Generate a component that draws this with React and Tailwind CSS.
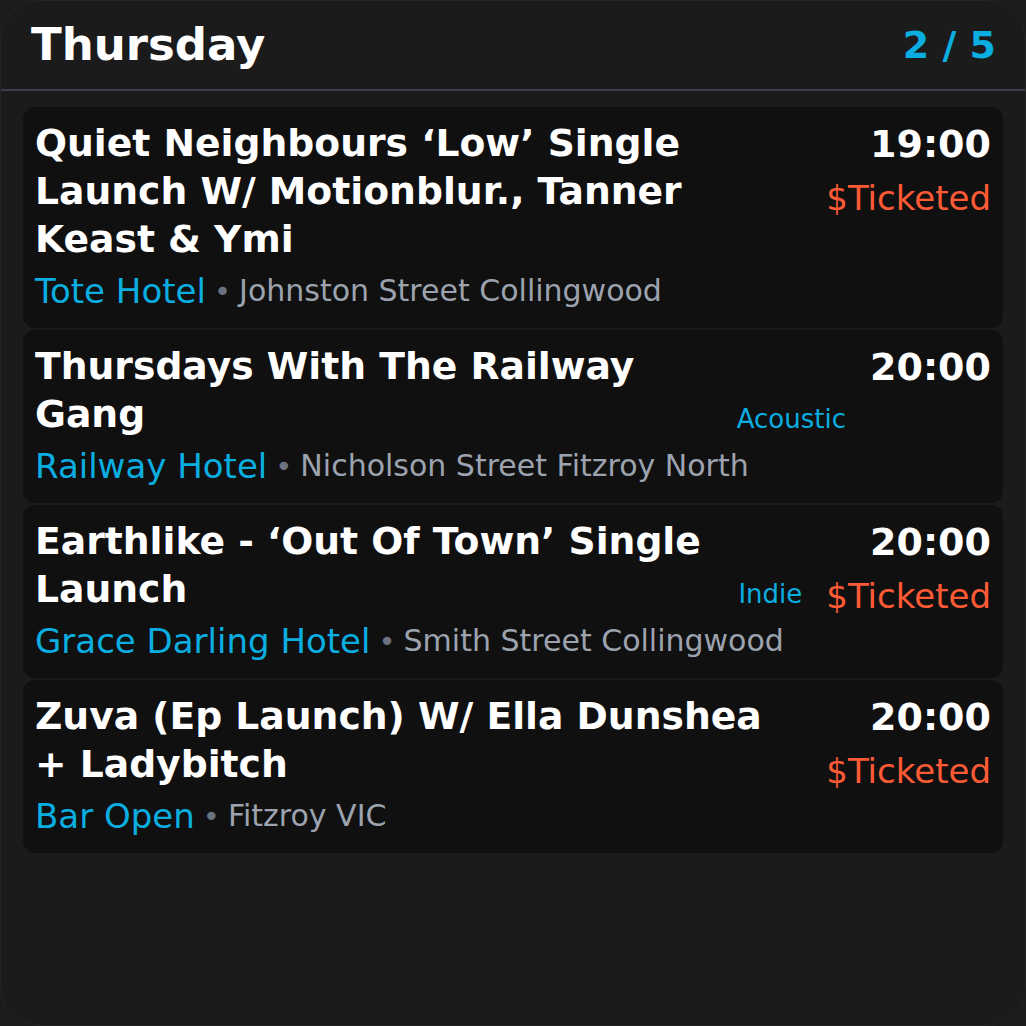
import React from 'react';

const events = [
  {
    title: 'Quiet Neighbours ‘Low’ Single Launch W/ Motionblur., Tanner Keast & Ymi',
    venue: 'Tote Hotel',
    address: 'Johnston Street Collingwood',
    time: '19:00',
    price: '$Ticketed',
  },
  {
    title: 'Thursdays With The Railway Gang',
    venue: 'Railway Hotel',
    address: 'Nicholson Street Fitzroy North',
    time: '20:00',
    genre: 'Acoustic',
  },
  {
    title: 'Earthlike - ‘Out Of Town’ Single Launch',
    venue: 'Grace Darling Hotel',
    address: 'Smith Street Collingwood',
    time: '20:00',
    genre: 'Indie',
    price: '$Ticketed',
  },
  {
    title: 'Zuva (Ep Launch) W/ Ella Dunshea + Ladybitch',
    venue: 'Bar Open',
    address: 'Fitzroy VIC',
    time: '20:00',
    price: '$Ticketed',
  },
];

const EventCard = ({ ev }) => (
  <div className="rounded-xl bg-[#101010] px-3 pt-3 pb-[13px]">
    {/* top row: title on the left, genre + time/price on the right */}
    <div className="flex items-stretch">
      <h3 className="flex-1 min-w-0 text-[37.7px] leading-[48px] font-bold text-white">
        {ev.title}
      </h3>
      {ev.genre && (
        <span className="self-end ml-6 text-[26px] leading-[38px] text-[#0aaee0]">
          {ev.genre}
        </span>
      )}
      <div className={`flex flex-col items-end ${ev.genre ? 'ml-6' : 'ml-8'}`}>
        <span className="text-[38px] leading-[50px] font-bold text-white">{ev.time}</span>
        {ev.price && (
          <span className="mt-[13px] text-[34px] leading-[32px] text-[#ff5a36]">{ev.price}</span>
        )}
      </div>
    </div>

    {/* venue line */}
    <div className="mt-1 h-[48px] flex items-center text-[34px] leading-none whitespace-nowrap">
      <span className="text-[#0aaee0]">{ev.venue}</span>
      <span className="text-[#6b7280] text-[29px] mx-[8px]">•</span>
      <span className="text-[#9ca3af] text-[30px]">{ev.address}</span>
    </div>
  </div>
);

export default function App() {
  return (
    <div className="bg-[#1c1c1c] w-[1026px] h-[1026px]" style={{ fontFamily: '"DejaVu Sans", Verdana, sans-serif' }}>
      <div className="h-full rounded-[40px] border border-[#242424] bg-[#1b1b1b] overflow-hidden">
        {/* header */}
        <div className="flex items-center justify-between h-[90px] pl-[30px] pr-[29px] border-b-2 border-[#383e49]">
          <h1 className="text-[45px] font-bold text-white">Thursday</h1>
          <span className="text-[38px] font-bold text-[#0aaee0]">2 / 5</span>
        </div>

        {/* list */}
        <div className="flex flex-col gap-[2px] px-[22px] pt-4">
          {events.map((ev, i) => (
            <EventCard key={i} ev={ev} />
          ))}
        </div>
      </div>
    </div>
  );
}
